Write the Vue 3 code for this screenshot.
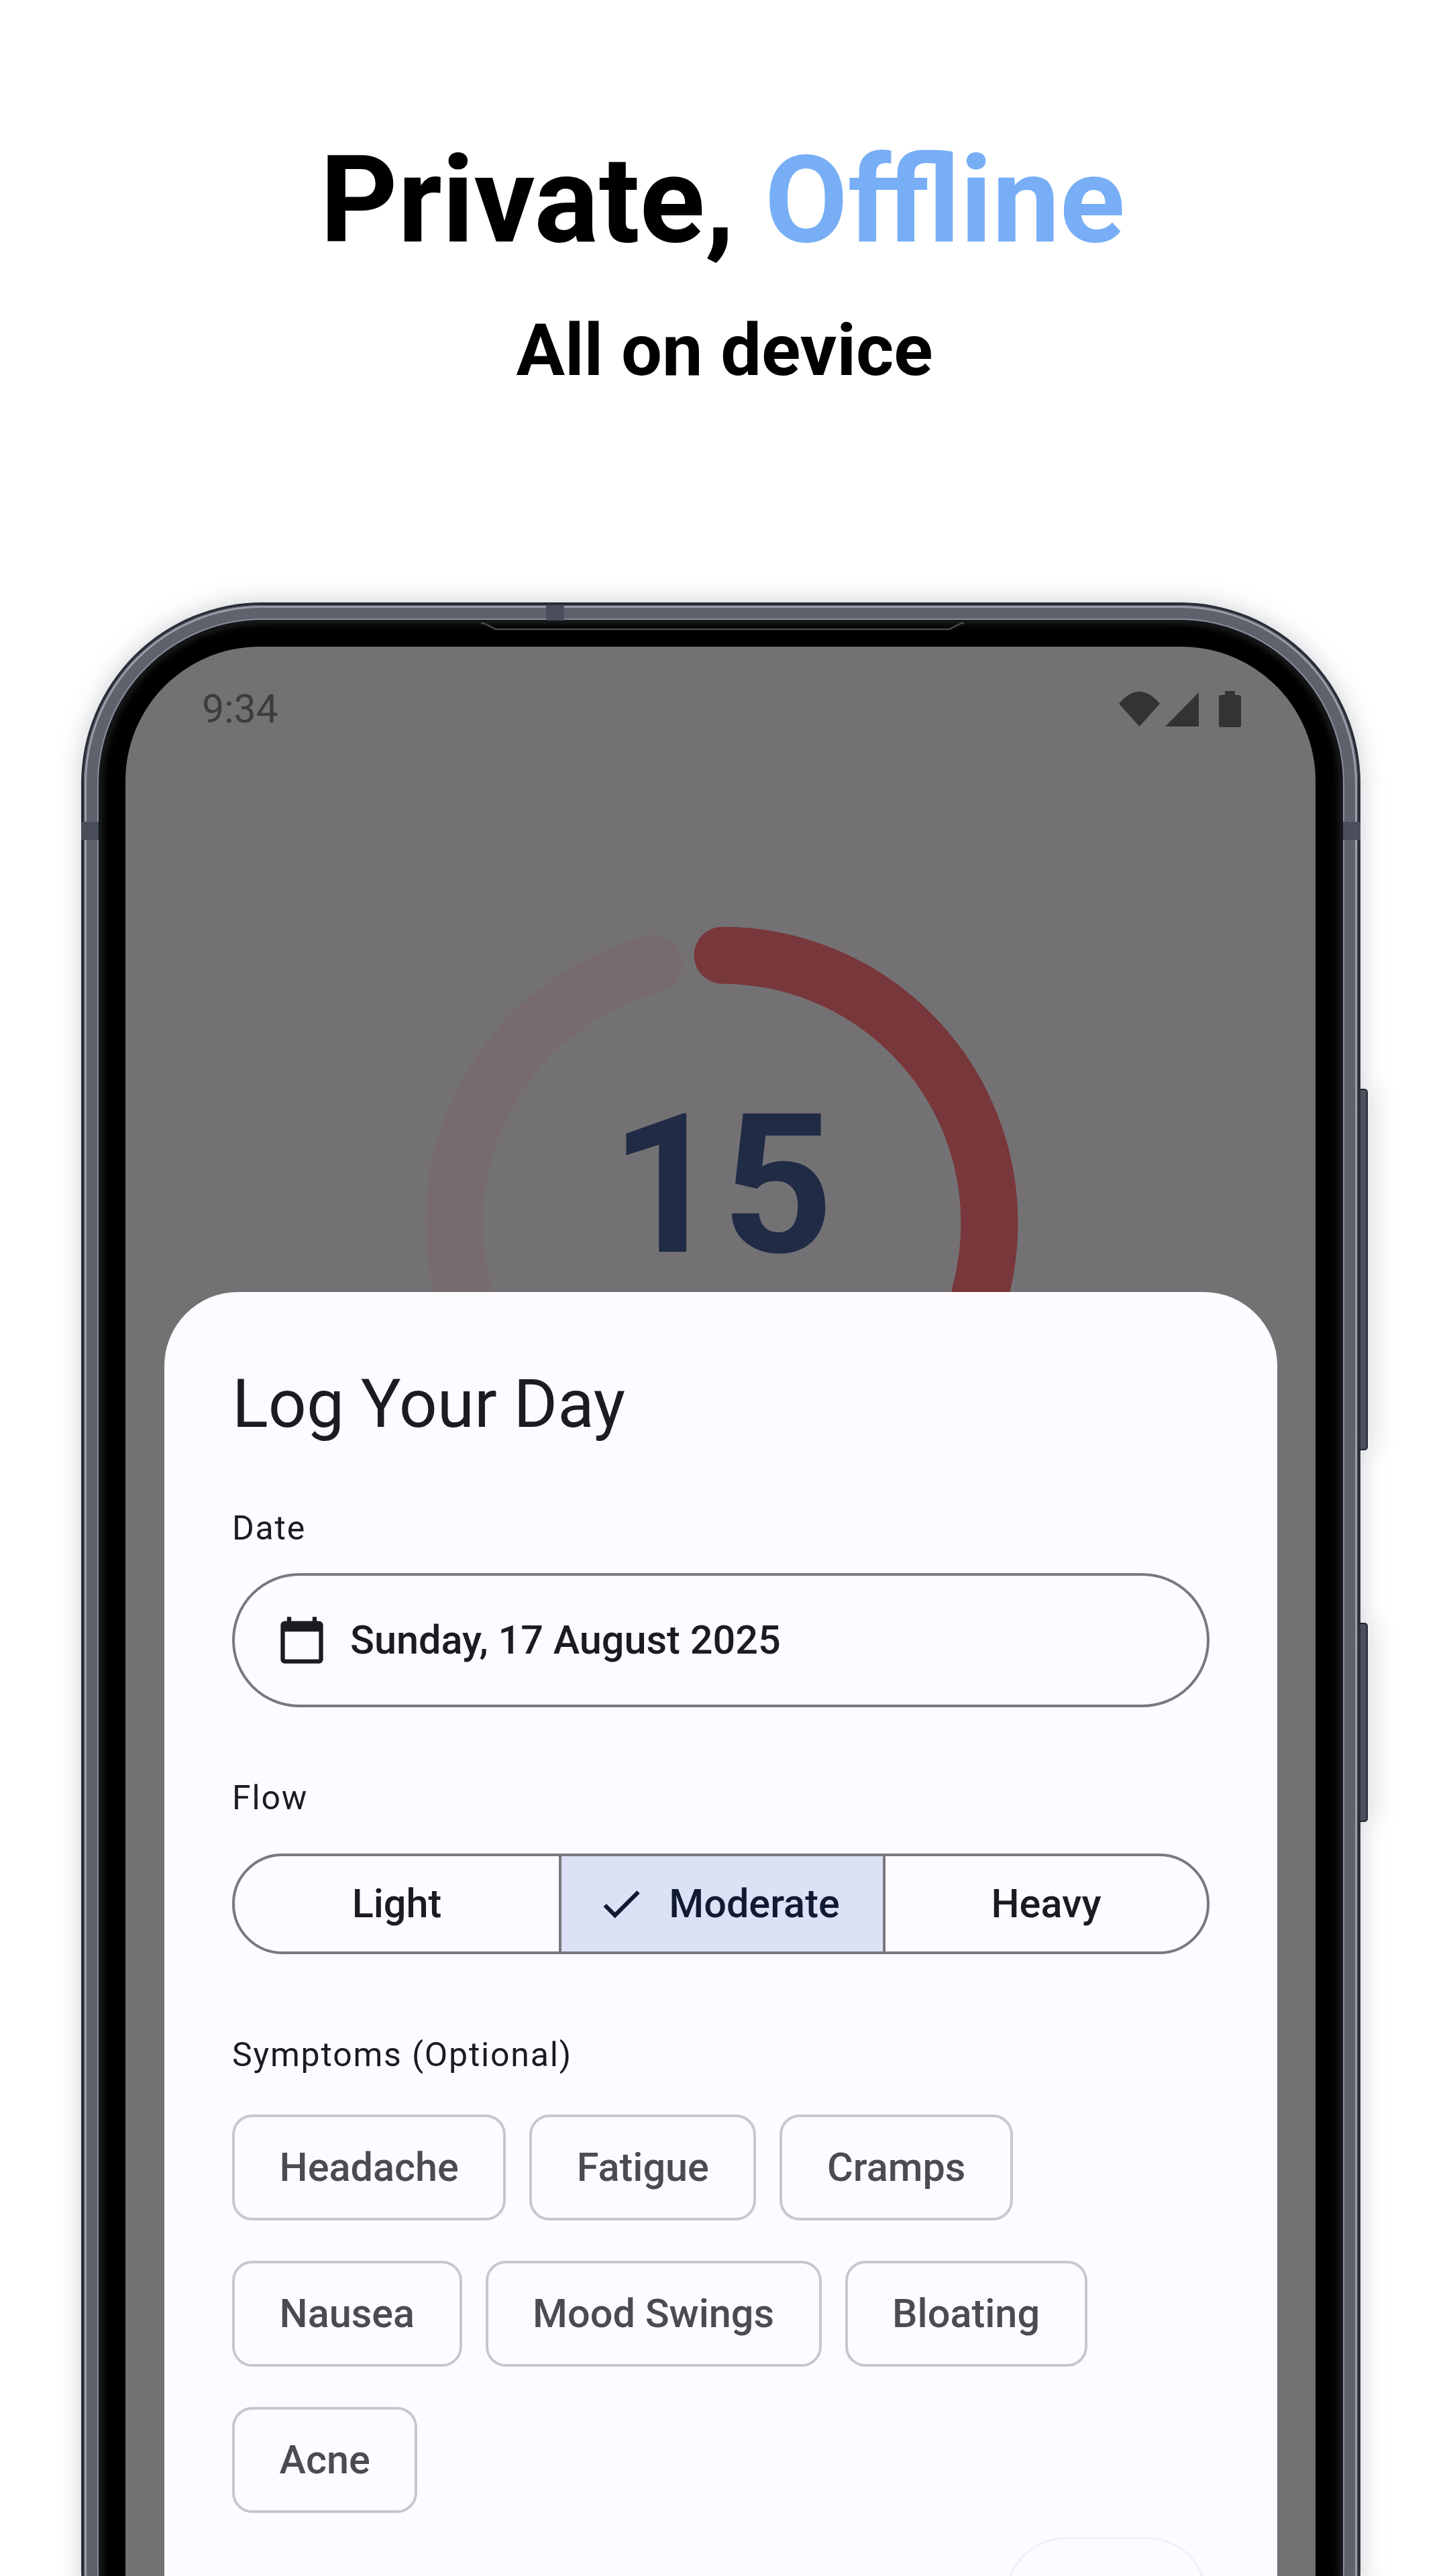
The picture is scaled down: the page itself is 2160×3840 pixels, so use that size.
<script setup>
const flowOptions = [
  { label: 'Light', selected: false },
  { label: 'Moderate', selected: true },
  { label: 'Heavy', selected: false }
]

const symptoms = ['Headache', 'Fatigue', 'Cramps', 'Nausea', 'Mood Swings', 'Bloating', 'Acne']
</script>

<template>
  <div class="page">
    <header class="hero">
      <h1 class="hero-title">Private, <span class="accent">Offline</span></h1>
      <h2 class="hero-sub">All on device</h2>
    </header>

    <div class="phone">
      <div class="side-btn power"></div>
      <div class="side-btn volume"></div>
      <div class="seam seam-top"></div>
      <div class="seam seam-left"></div>
      <div class="seam seam-right"></div>

      <div class="band">
        <div class="bezel">
          <svg class="speaker" width="720" height="14" viewBox="0 0 720 14">
            <path d="M0 2H4L22 11H698L716 2H720" fill="none" stroke="#4a4a4a" stroke-width="2.5" />
          </svg>

          <div class="screen">
            <div class="status">
              <span class="time">9:34</span>
              <svg class="status-icons" width="182" height="54" viewBox="0 0 182 54">
                <path d="M30.5 53 0 19Q30.5-17 61 19Z" fill="#333" />
                <path d="M119 2V53H69Z" fill="#333" />
                <path d="M158 6V1.500Q158 0 159.500 0H171.500Q173 0 173 1.500V6H179Q182 6 182 9V51Q182 54 179 54H152Q149 54 149 51V9Q149 6 152 6Z" fill="#333" />
              </svg>
            </div>

            <div class="ring">
              <svg width="920" height="920" viewBox="0 0 920 920">
                <path d="M358 74A399 399 0 0 0 61 460A399 399 0 0 0 75 565" fill="none" stroke="#786b6e" stroke-width="85" stroke-linecap="round" />
                <path d="M461 61A399 399 0 0 1 859 460A399 399 0 0 1 845 565" fill="none" stroke="#78373a" stroke-width="85" stroke-linecap="round" />
              </svg>
              <span class="day-count">15</span>
            </div>

            <section class="sheet">
              <h3 class="sheet-title">Log Your Day</h3>

              <p class="field-label date-label">Date</p>
              <div class="date-field">
                <svg class="calendar" width="76" height="76" viewBox="0 0 24 24">
                  <path d="M20 3h-1V1h-2v2H7V1H5v2H4c-1.100 0-2 .9-2 2v16c0 1.100.9 2 2 2h16c1.100 0 2-.9 2-2V5c0-1.100-.9-2-2-2zm0 18H4V8h16v13z" fill="#1b1b20" />
                </svg>
                <span class="date-value">Sunday, 17 August 2025</span>
              </div>

              <p class="field-label flow-label">Flow</p>
              <div class="segments">
                <div v-for="opt in flowOptions" :key="opt.label" class="segment" :class="{ selected: opt.selected }">
                  <svg v-if="opt.selected" class="check" width="74" height="74" viewBox="0 0 24 24">
                    <path d="M9 16.170L4.830 12l-1.420 1.410L9 19 21 7l-1.410-1.410z" fill="#101a33" />
                  </svg>
                  <span>{{ opt.label }}</span>
                </div>
              </div>

              <p class="field-label symptoms-label">Symptoms (Optional)</p>
              <div class="chips">
                <div v-for="s in symptoms" :key="s" class="chip">{{ s }}</div>
              </div>

              <div class="save-row">
                <div class="save-btn"></div>
              </div>
            </section>
          </div>
        </div>
      </div>
    </div>
  </div>
</template>

<style scoped>
.page {
  width: 2160px;
  height: 3840px;
  overflow: hidden;
  background: #fff;
  font-family: Roboto, "Liberation Sans", sans-serif;
}

.hero {
  padding-top: 199px;
  text-align: center;
}

.hero-title {
  margin: 0;
  padding-right: 6px;
  font-size: 180px;
  line-height: 200px;
  font-weight: 700;
  color: #000;
}

.accent {
  color: #77aef5;
}

.hero-sub {
  margin: 58px 0 0;
  font-size: 108px;
  line-height: 130px;
  font-weight: 700;
  color: #000;
}

.phone {
  position: relative;
  margin: 311px 0 0 121px;
  width: 1907px;
  height: 3200px;
  padding: 4px;
  box-sizing: border-box;
  border-radius: 270px;
  background: #2b2e38;
  box-shadow: 0 0 36px rgba(70, 80, 90, 0.28);
}

.side-btn {
  position: absolute;
  right: -11px;
  width: 11px;
  box-sizing: border-box;
  border: 2px solid #22252e;
  border-left: 0;
  border-radius: 0 5px 5px 0;
  background: #4b505c;
  box-shadow: 14px 0 30px rgba(70, 80, 90, 0.18);
}

.power {
  top: 725px;
  height: 539px;
}

.volume {
  top: 1521px;
  height: 297px;
}

.seam {
  position: absolute;
  background: #4a4e5b;
  z-index: 1;
}

.seam-top {
  left: 693px;
  top: 4px;
  width: 27px;
  height: 23px;
}

.seam-left {
  left: 0;
  top: 327px;
  width: 26px;
  height: 27px;
}

.seam-right {
  right: 0;
  top: 327px;
  width: 26px;
  height: 27px;
}

.band {
  height: 100%;
  padding: 22px;
  box-sizing: border-box;
  border-radius: 266px;
  background: #5d626d;
  box-shadow: inset 0 0 0 1px #4e525d, inset 0 0 0 4px #9a9ea8;
}

.bezel {
  position: relative;
  height: 100%;
  padding: 37px 38px 0 37px;
  box-sizing: border-box;
  border: 3px solid #15171c;
  border-radius: 244px;
  background: #000;
  box-shadow: 0 0 0 2px #8a8f99, inset 0 0 14px rgba(70, 70, 70, 0.7);
}

.speaker {
  position: absolute;
  left: 567px;
  top: 0;
}

.screen {
  position: relative;
  height: 100%;
  padding-top: 58px;
  box-sizing: border-box;
  border-radius: 200px 200px 0 0;
  background: #747174;
  overflow: hidden;
}

.status {
  display: flex;
  justify-content: space-between;
  align-items: center;
  padding: 0 111px 0 114px;
}

.time {
  font-size: 59px;
  line-height: 70px;
  color: #3c3b3d;
}

.ring {
  display: grid;
  width: 920px;
  margin: 271px 0 0 429px;
}

.ring > * {
  grid-area: 1 / 1;
}

.day-count {
  justify-self: center;
  margin-top: 259px;
  font-size: 290px;
  line-height: 290px;
  font-weight: 700;
  color: #202b45;
}

.sheet {
  position: absolute;
  left: 58px;
  right: 57px;
  top: 962px;
  padding: 107px 101px 0;
  box-sizing: border-box;
  border-radius: 110px 110px 0 0;
  background: #fdfbff;
  color: #1b1b20;
}

.sheet-title {
  margin: 0;
  font-size: 100px;
  line-height: 120px;
  font-weight: 400;
}

.field-label {
  margin: 0;
  font-size: 50px;
  line-height: 60px;
  letter-spacing: 1.8px;
}

.date-label {
  margin-top: 95px;
}

.flow-label {
  margin-top: 105px;
}

.symptoms-label {
  margin-top: 120px;
}

.date-field {
  display: flex;
  align-items: center;
  gap: 34px;
  height: 200px;
  margin-top: 37px;
  padding-left: 62px;
  box-sizing: border-box;
  border: 4px solid #7a787e;
  border-radius: 100px;
}

.date-value {
  font-size: 59.4px;
  font-weight: 500;
}

.segments {
  display: grid;
  grid-template-columns: repeat(3, 1fr);
  height: 150px;
  margin-top: 53px;
  box-sizing: border-box;
  border: 4px solid #7a787e;
  border-radius: 75px;
  overflow: hidden;
}

.segment {
  display: flex;
  align-items: center;
  justify-content: center;
  gap: 34px;
  box-sizing: border-box;
  min-width: 0;
  font-size: 59.4px;
  font-weight: 500;
}

.segment + .segment {
  border-left: 4px solid #7a787e;
}

.segment.selected {
  padding-right: 12px;
  background: #dce1f6;
  color: #101a33;
}

.chips {
  display: flex;
  flex-wrap: wrap;
  gap: 60px 35px;
  margin-top: 59px;
}

.chip {
  display: flex;
  align-items: center;
  height: 158px;
  padding: 0 66.5px;
  box-sizing: border-box;
  border: 4px solid #c8c7cb;
  border-radius: 30px;
  font-size: 59.4px;
  font-weight: 500;
  color: #4b4b52;
}

.save-row {
  display: flex;
  justify-content: flex-end;
  margin-top: 36px;
}

.save-btn {
  width: 301px;
  height: 200px;
  margin-right: 3px;
  box-sizing: border-box;
  border: 3px solid #f1f0f3;
  border-radius: 90px;
}
</style>

<style>
html,
body {
  margin: 0;
  background: #fff;
}
</style>
